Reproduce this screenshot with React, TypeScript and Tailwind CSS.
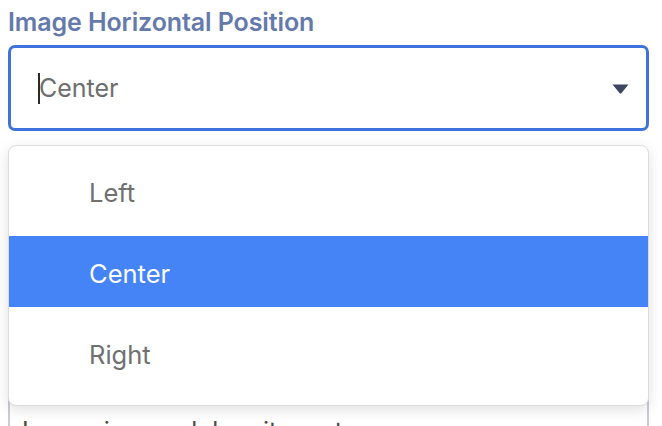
import { useState } from 'react';

const options = ['Left', 'Center', 'Right'];

const App = () => {
  const [selected] = useState('Center');

  return (
    <div className="h-[426px] bg-white px-[8px] pt-[8px] font-['Inter',sans-serif] overflow-hidden">
      <div className="relative w-[641px]">
        <label className="block text-[25px] leading-[28px] font-semibold text-[#6479ad] tracking-[-0.1px]">
          Image Horizontal Position
        </label>

        {/* select box */}
        <div className="mt-[9px] h-[86px] rounded-[7px] border-[3px] border-[#3f73db] flex items-center pl-[27px] pr-[14px]">
          <span className="w-[2px] h-[31px] bg-[#2a2a2a] -mr-[1px]"></span>
          <span className="flex-1 pt-[2px] text-[25px] text-[#6e6e6e]">{selected}</span>
          <svg width="17" height="10" viewBox="0 0 17 10" className="mr-[3px] mt-[2px]">
            <path d="M0.5 0.5 H16.5 L9.5 9 Q8.5 10 7.5 9 Z" fill="#3d4560" />
          </svg>
        </div>

        {/* field underneath the menu */}
        <div className="mt-[250px] h-[120px] border-l-2 border-r-2 border-t border-[#c9cbdc] bg-white pl-[12px] pt-[34px] text-[25px] leading-[30px] text-[#4a4a4a]">
          Lorem ipsum dolor sit amet
        </div>

        {/* open dropdown menu */}
        <div className="absolute left-0 top-[137px] w-[641px] rounded-[8px] border border-[#dcdcdc] bg-white pt-[9px] pb-[17px] shadow-[0_4px_14px_rgba(0,0,0,0.12)] overflow-hidden">
          <div className="flex flex-col gap-[10px]">
            {options.map((opt) => (
              <div
                key={opt}
                className={
                  opt === selected
                    ? 'h-[71px] flex items-center pl-[80px] pt-[5px] text-[25.5px] bg-[#4584f6] text-white'
                    : 'h-[71px] flex items-center pl-[80px] pt-[5px] text-[25.5px] text-[#707070]'
                }
              >
                {opt}
              </div>
            ))}
          </div>
        </div>
      </div>
    </div>
  );
};

export default App;
